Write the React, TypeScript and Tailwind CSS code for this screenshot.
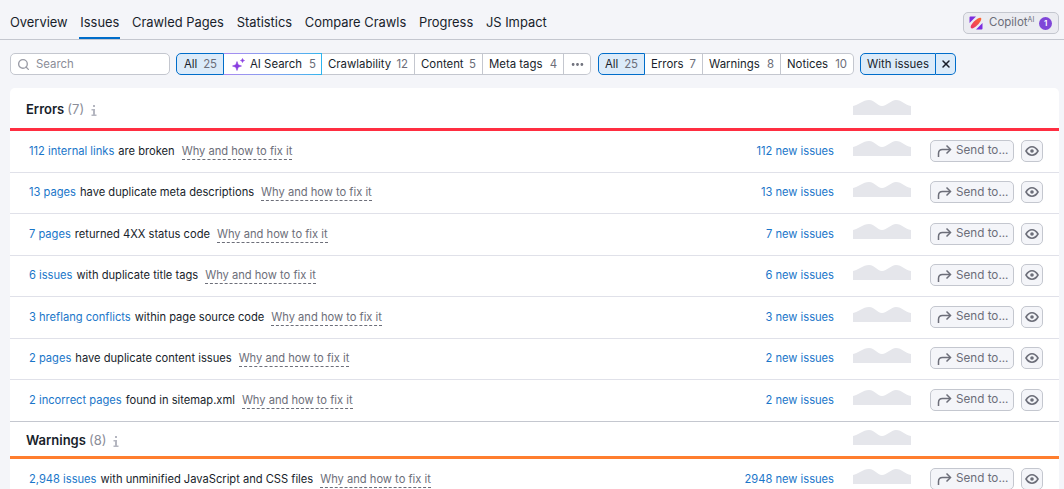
import React from 'react';
import { Search, X, Ellipsis } from 'lucide-react';

const tabs = ['Overview', 'Issues', 'Crawled Pages', 'Statistics', 'Compare Crawls', 'Progress', 'JS Impact'];

const categoryFilters = [
    { label: 'Crawlability', count: 12, width: 'w-[93px]' },
    { label: 'Content', count: 5, width: 'w-[68px]' },
    { label: 'Meta tags', count: 4, width: 'w-[81px]' },
];

const severityFilters = [
    { label: 'Errors', count: 7, width: 'w-[58px]' },
    { label: 'Warnings', count: 8, width: 'w-[78px]' },
    { label: 'Notices', count: 10, width: 'w-[73px]' },
];

const errorRows = [
    { link: '112 internal links', text: 'are broken', fresh: '112 new issues' },
    { link: '13 pages', text: 'have duplicate meta descriptions', fresh: '13 new issues' },
    { link: '7 pages', text: 'returned 4XX status code', fresh: '7 new issues' },
    { link: '6 issues', text: 'with duplicate title tags', fresh: '6 new issues' },
    { link: '3 hreflang conflicts', text: 'within page source code', fresh: '3 new issues' },
    { link: '2 pages', text: 'have duplicate content issues', fresh: '2 new issues' },
    { link: '2 incorrect pages', text: 'found in sitemap.xml', fresh: '2 new issues' },
];

function Sparkline() {
    return (
        <svg width="58" height="15" viewBox="0 0 58 15" className="shrink-0">
            <path
                d="M0 6 C5 5 10 0 16 0 C22 0 24 6 29 6 C34 6 38 0 43 0 C49 0 52 5 58 6 L58 15 L0 15 Z"
                fill="#e5e6eb"
            />
        </svg>
    );
}

function FilterCount({ label, count }: { label: string; count: number }) {
    return (
        <>
            <span>{label}</span>
            <span className="text-[#6c6e79]">{count}</span>
        </>
    );
}

function IssueRow({ link, text, fresh, last }: { link: string; text: string; fresh: string; last?: boolean }) {
    return (
        <div className={`flex h-[41.5px] items-center border-b pl-[19px] pr-4 text-[11.15px] ${last ? 'border-[#c4c7cf]' : 'border-[#e0e1e9]'}`}>
            <div className="flex flex-1 items-center">
                <a className="text-[#1a76c9]">{link}</a>
                <span className="ml-1 text-[#181e2b]">{text}</span>
                <span className="ml-[7px] mt-[1px] border-b border-dashed border-[#6c6e79] leading-[15px] text-[#6c6e79]">
                    Why and how to fix it
                </span>
            </div>
            <span className="text-[#1a76c9]">{fresh}</span>
            <div className="ml-[19px] mt-[-6px]">
                <Sparkline />
            </div>
            <button className="ml-[19px] mt-[-1px] flex h-[22px] w-[84px] items-center gap-[4px] whitespace-nowrap rounded-[5px] border border-[#c4c7cf] bg-[#f4f5f9] pl-[6px] text-[11.7px] text-[#6c6e79]">
                <svg width="15" height="15" viewBox="0 0 15 15" fill="none" stroke="#6c6e79" strokeWidth="1.5" className="mt-[2px] shrink-0">
                    <path d="M1.5 13 V9.5 C1.5 7 3 5.5 5.5 5.5 H13" />
                    <path d="M9.5 1.5 L13.5 5.5 L9.5 9.5" />
                </svg>
                <span className="mt-[1px]">Send to...</span>
            </button>
            <button className="ml-[7px] mt-[-1px] flex h-[22px] w-[22px] items-center justify-center rounded-[5px] border border-[#c4c7cf] bg-[#f4f5f9]">
                <svg width="14" height="14" viewBox="0 0 14 14" fill="none" stroke="#6c6e79" strokeWidth="1.6">
                    <path d="M1 7 C3 3.6 5 2.8 7 2.8 C9 2.8 11 3.6 13 7 C11 10.4 9 11.2 7 11.2 C5 11.2 3 10.4 1 7 Z" />
                    <circle cx="7" cy="7" r="1.8" fill="#6c6e79" stroke="none" />
                </svg>
            </button>
        </div>
    );
}

function SectionHeader({ title, count, color, height }: { title: string; count: number; color: string; height: string }) {
    return (
        <div className={`flex items-center border-b-[3px] pl-4 pr-[148px] ${height} ${color}`}>
            <div className="flex flex-1 items-center pt-1">
                <span className="text-[13px] font-semibold text-[#181e2b]">{title}</span>
                <span className="ml-[3px] text-[13px] text-[#8b8d98]">({count})</span>
                <svg width="6" height="11" viewBox="0 0 6 11" fill="#b4b6c0" className="ml-[7px] mt-[1px]">
                    <rect x="2" y="0" width="2" height="2" />
                    <path d="M0.5 4 H4 V9.5 H5.5 V11 H0.5 V9.5 H2 V5.5 H0.5 Z" />
                </svg>
            </div>
            <div className="mt-[-2px]">
                <Sparkline />
            </div>
        </div>
    );
}

export default function App() {
    return (
        <div className="h-[489px] w-[1064px] overflow-hidden bg-[#f4f5f9] font-['Inter',sans-serif] text-[#181e2b]">
            {/* tabs */}
            <div className="flex h-10 items-stretch justify-between border-b border-[#c4c7cf] pl-[9px] pr-[5px]">
                <div className="flex gap-[10.7px]">
                    {tabs.map((tab) => (
                        <div
                            key={tab}
                            className={`flex items-center border-b-2 px-[1px] text-[12.9px] leading-none ${tab === 'Issues' ? 'border-[#006dca]' : 'border-transparent'}`}
                        >
                            <span className="mt-[10px]">{tab}</span>
                        </div>
                    ))}
                </div>
                <div className="mt-3 flex h-[22px] w-[96px] items-center rounded-[5px] border border-[#c4c7cf] bg-[#ebecf1] pl-[5px] text-[11.5px] text-[#6c6e79]">
                    <svg width="14" height="14" viewBox="0 0 14 14" className="shrink-0">
                        <defs>
                            <linearGradient id="copilotPill" x1="0" y1="1" x2="1" y2="0">
                                <stop offset="0" stopColor="#e8306e" />
                                <stop offset="1" stopColor="#ff6a2e" />
                            </linearGradient>
                        </defs>
                        <path d="M0.5 1.5 Q0.5 0.5 1.5 0.5 L7 0.5 L0.5 7 Z M13.5 12.5 Q13.5 13.5 12.5 13.5 L7 13.5 L13.5 7 Z" fill="#7c2de0" />
                        <path d="M2 12 C1 11 2 8.5 5 5.5 C8 2.5 11 1 12 2 C13 3 11.5 6 8.5 9 C5.5 12 3 13 2 12 Z" fill="url(#copilotPill)" />
                    </svg>
                    <span className="ml-[6px]">Copilot</span>
                    <sup className="text-[7px]">AI</sup>
                    <span className="ml-[5px] flex h-[13px] w-[13px] items-center justify-center rounded-full bg-[#7f46d8] text-[8px] font-semibold text-white">1</span>
                </div>
            </div>

            {/* filter toolbar */}
            <div className="flex h-[48px] items-center pl-[10px] text-[11.4px] leading-none">
                <div className="flex h-[22px] w-[160px] items-center rounded-[5px] border border-[#c4c7cf] bg-white pl-[6px] text-[#8b8d98]">
                    <Search size={13} strokeWidth={2.5} color="#9a9ca6" />
                    <span className="ml-[6px] mt-[1px]">Search</span>
                </div>
                <div className="ml-[6px] flex h-[22px] items-stretch">
                    <div className="flex w-[48px] items-center justify-between rounded-l-[5px] border border-[#006dca] bg-[#dcebf9] pl-[7px] pr-[6px] pt-[1px]">
                        <FilterCount label="All" count={25} />
                    </div>
                    <div className="w-[98px] bg-linear-to-r from-[#a98af0] to-[#2cb5ee] py-[1px] pr-[1px]">
                        <div className="flex h-full items-center bg-white pl-2">
                            <svg width="13" height="13" viewBox="0 0 13 13" fill="#8a3fe0" stroke="#8a3fe0" strokeWidth="0.6" strokeLinejoin="round" className="shrink-0">
                                <path d="M5 3.5 L6.2 6.8 L9.5 8 L6.2 9.2 L5 12.5 L3.8 9.2 L0.5 8 L3.8 6.8 Z" />
                                <path d="M10.5 0.5 L11.1 1.9 L12.5 2.5 L11.1 3.1 L10.5 4.5 L9.9 3.1 L8.5 2.5 L9.9 1.9 Z" />
                            </svg>
                            <span className="ml-[5px] mt-[1px]">AI Search</span>
                            <span className="ml-[7px] mt-[1px] text-[#6c6e79]">5</span>
                        </div>
                    </div>
                    {categoryFilters.map((f) => (
                        <div key={f.label} className={`flex items-center justify-between border-y border-r border-[#c4c7cf] bg-white pl-[6px] pr-[6px] pt-[1px] ${f.width}`}>
                            <FilterCount label={f.label} count={f.count} />
                        </div>
                    ))}
                    <div className="flex w-[27px] items-center justify-center rounded-r-[5px] border-y border-r border-[#c4c7cf] bg-white">
                        <Ellipsis size={15} strokeWidth={2.5} color="#6c6e79" />
                    </div>
                </div>
                <div className="ml-[7px] flex h-[22px] items-stretch">
                    <div className="flex w-[47px] items-center justify-between rounded-l-[5px] border border-[#006dca] bg-[#dcebf9] pl-[6px] pr-[6px] pt-[1px]">
                        <FilterCount label="All" count={25} />
                    </div>
                    {severityFilters.map((f, i) => (
                        <div
                            key={f.label}
                            className={`flex items-center justify-between border-y border-r border-[#c4c7cf] bg-white pl-[6px] pr-[6px] pt-[1px] ${f.width} ${i === severityFilters.length - 1 ? 'rounded-r-[5px]' : ''}`}
                        >
                            <FilterCount label={f.label} count={f.count} />
                        </div>
                    ))}
                </div>
                <div className="ml-[6px] flex h-[22px] items-stretch">
                    <div className="flex w-[76px] items-center justify-center rounded-l-[5px] border border-[#006dca] bg-[#dcebf9] pt-[1px]">With issues</div>
                    <div className="flex w-[20px] items-center justify-center rounded-r-[5px] border-y border-r border-[#006dca] bg-[#dcebf9]">
                        <X size={12} strokeWidth={3} color="#181e2b" />
                    </div>
                </div>
            </div>

            {/* issues card */}
            <div className="ml-[10px] w-[1049px] rounded-t-[5px] bg-white">
                <SectionHeader title="Errors" count={7} color="border-[#ff2e41]" height="h-[43px]" />
                {errorRows.map((row, i) => (
                    <IssueRow key={row.link} {...row} last={i === errorRows.length - 1} />
                ))}
                <SectionHeader title="Warnings" count={8} color="border-[#ff7e2e]" height="h-[37.5px]" />
                <IssueRow link="2,948 issues" text="with unminified JavaScript and CSS files" fresh="2948 new issues" />
            </div>
        </div>
    );
}
